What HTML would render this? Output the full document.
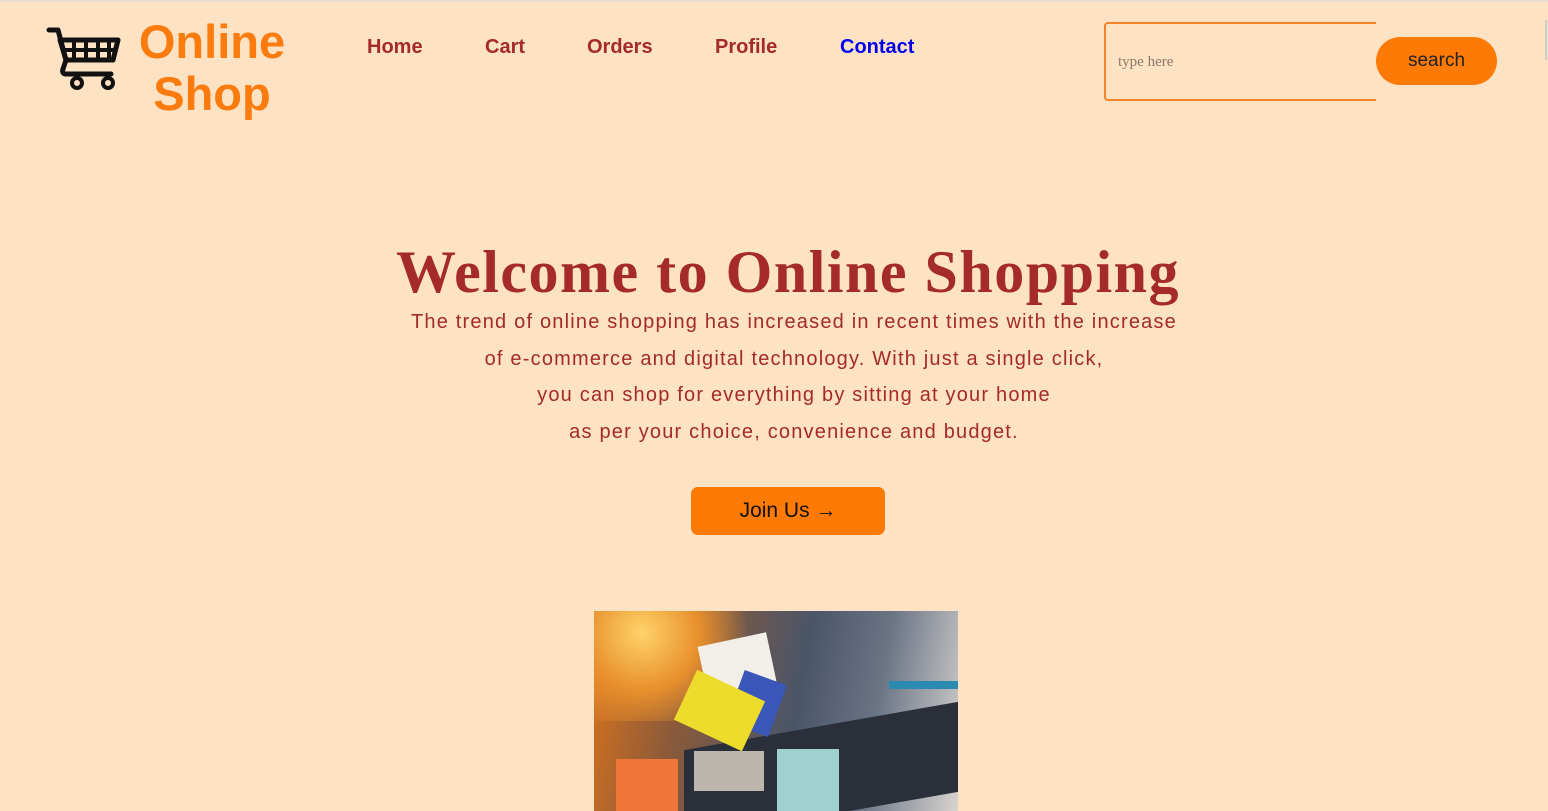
<!DOCTYPE html>
<html><head><style>
html,body{margin:0;padding:0}
body{width:1548px;height:809px;background:#fde2c3;position:relative;overflow:hidden;font-family:"Liberation Sans",Arial,sans-serif;border-top:2px solid #e8dccd;box-sizing:border-box}
.a{position:absolute}
.logo{left:137px;top:14px;color:#fb7b0e;font-weight:bold;font-size:47px;line-height:52px;text-align:center;width:150px}
.nav{top:34px;font-weight:bold;font-size:20px;color:#a52a2a}
h1{position:absolute;left:0;width:1576px;text-align:center;top:236px;margin:0;font-family:"Liberation Serif",serif;font-size:60px;color:#a52a2a;letter-spacing:1.5px}
.p{left:0;width:1588px;text-align:center;font-size:20px;color:#a52a2a;letter-spacing:1.2px;line-height:36.7px;top:302px}
</style></head><body>
<svg class="a" style="left:46px;top:24px" width="76" height="68" viewBox="0 0 76 68">
<path d="M3 4h9l8 30h44" fill="none" stroke="#111" stroke-width="5" stroke-linecap="round" stroke-linejoin="round"/>
<path d="M14 14h58l-5 20H20z" fill="none" stroke="#111" stroke-width="5" stroke-linejoin="round"/>
<path d="M28 14v20M40 14v20M52 14v20M63 14v20M16 24h53" stroke="#111" stroke-width="4"/>
<path d="M20 34l-3 9c-1 3 0 5 3 5h45" fill="none" stroke="#111" stroke-width="5" stroke-linecap="round"/>
<circle cx="31" cy="57" r="5" fill="none" stroke="#111" stroke-width="4"/>
<circle cx="62" cy="57" r="5" fill="none" stroke="#111" stroke-width="4"/>
</svg>
<div class="a logo">Online<br>Shop</div>
<div class="a nav" style="left:367px">Home</div>
<div class="a nav" style="left:485px">Cart</div>
<div class="a nav" style="left:587px">Orders</div>
<div class="a nav" style="left:715px">Profile</div>
<div class="a nav" style="left:840px;color:#0000ee">Contact</div>
<div class="a" style="left:1104px;top:20px;width:270px;height:75px;border:2px solid #f3842a;border-right:none;border-radius:4px 0 0 4px"></div>
<div class="a" style="left:1118px;top:52px;font-family:'Liberation Serif',serif;font-size:15px;color:#8a7a6a">type here</div>
<div class="a" style="left:1376px;top:35px;width:121px;height:48px;background:#fd7a07;border-radius:24px;text-align:center;line-height:48px;font-size:19px;color:#222">search</div>
<div class="a" style="left:1545px;top:18px;width:2px;height:40px;background:#ccc"></div>
<h1>Welcome to Online Shopping</h1>
<div class="a p">The trend of online shopping has increased in recent times with the increase<br>of e-commerce and digital technology. With just a single click,<br>you can shop for everything by sitting at your home<br>as per your choice, convenience and budget.</div>
<div class="a" style="left:691px;top:485px;width:194px;height:48px;background:#fd7a07;border-radius:7px;text-align:center;line-height:48px;font-size:21px;color:#111">Join Us →</div>
<div class="a" style="left:594px;top:609px;width:364px;height:200px;overflow:hidden;background:linear-gradient(100deg,#d9731c 0%,#8a5a3a 25%,#4b5568 55%,#6a7485 75%,#d8d4d0 100%)">
<div class="a" style="left:0;top:0;width:160px;height:110px;background:radial-gradient(circle at 30% 20%,#ffd36a,#e8902d 40%,rgba(200,110,40,0) 75%)"></div>
<div class="a" style="left:90px;top:115px;width:274px;height:90px;background:#2a2f3a;transform:skewY(-10deg)"></div>
<div class="a" style="left:295px;top:70px;width:69px;height:8px;background:#2a8ab0"></div>
<div class="a" style="left:108px;top:28px;width:70px;height:50px;background:#f2efe8;transform:rotate(-12deg)"></div>
<div class="a" style="left:140px;top:65px;width:45px;height:55px;background:#3a56b8;transform:rotate(20deg)"></div>
<div class="a" style="left:88px;top:72px;width:75px;height:55px;background:#eedc2c;transform:rotate(25deg)"></div>
<div class="a" style="left:100px;top:140px;width:70px;height:40px;background:#bdb6ad"></div>
<div class="a" style="left:22px;top:148px;width:62px;height:55px;background:#f0773a"></div>
<div class="a" style="left:183px;top:138px;width:62px;height:65px;background:#9fd2cf"></div>
</div>
</body></html>
